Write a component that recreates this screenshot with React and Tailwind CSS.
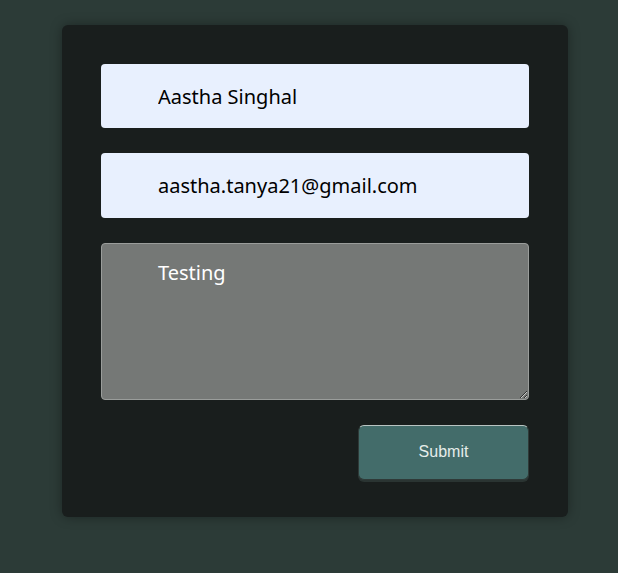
export default function App() {
  return (
    <div className="min-h-[573px] bg-[#2c3b37] pt-[25px] pl-[62px] font-['Noto_Sans',sans-serif]">
      <div className="w-[506px] rounded-md bg-[#191e1d] px-[39px] pt-[39px] pb-[37px] shadow-[0_0_12px_rgba(0,0,0,0.35)]">
        <div className="flex flex-col">
          <input
            defaultValue="Aastha Singhal"
            className="h-[64px] w-full rounded bg-[#e8f0fe] pl-[57px] text-[20px] text-black outline-none"
          />
          <input
            defaultValue="aastha.tanya21@gmail.com"
            className="mt-[25px] h-[65px] w-full rounded bg-[#e8f0fe] pl-[57px] text-[20px] text-black outline-none"
          />
          <textarea
            defaultValue="Testing"
            className="mt-[25px] h-[157px] w-full rounded border border-[#9a9d9b] bg-[#757876] pl-[56px] pt-[15px] text-[20px] leading-[28px] text-white outline-none"
          />
          <div className="mt-[25px] flex justify-end">
            <button className="h-[55px] w-[171px] rounded-md border border-[#2f3a38] border-t-[#b9c4c2] bg-[#436c6a] pb-[2px] font-['Liberation_Sans',sans-serif] text-[16px] text-[#e6ecea] shadow-[0_2px_0_#2a3432]">
              Submit
            </button>
          </div>
        </div>
      </div>
    </div>
  );
}
